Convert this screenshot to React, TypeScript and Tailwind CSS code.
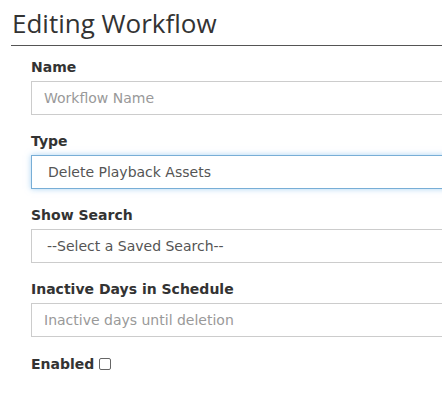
const font = { fontFamily: '"DejaVu Sans", Verdana, sans-serif' };

function Field({ label, children }: { label: string; children: React.ReactNode }) {
  return (
    <div className="mb-4">
      <label className="mb-[4px] block text-[14px] font-bold leading-[20px] text-[#333]">{label}</label>
      {children}
    </div>
  );
}

const box =
  'block h-[34px] w-[480px] border border-[#ccc] bg-white px-[12px] text-[14px] text-[#555] outline-none';

export default function App() {
  return (
    <div className="min-h-[402px] w-[442px] overflow-hidden bg-white" style={font}>
      <h1
        className="ml-[11px] border-b border-[#555] pt-[6px] pb-[5px] pl-[1px] text-[26px] leading-[34px] text-[#333]"
        style={{ fontFamily: '"Open Sans", "Segoe UI", sans-serif' }}
      >
        Editing Workflow
      </h1>
      <form className="pt-[11px] pl-[31px]">
        <Field label="Name">
          <input className={box + ' placeholder:text-[#999]'} placeholder="Workflow Name" />
        </Field>
        <Field label="Type">
          <div className="h-[34px] w-[480px] border border-[#78aed6] bg-white px-[16px] text-[14px] leading-[32px] text-[#555] shadow-[0_0_6px_rgba(102,175,233,0.55)]">
            Delete Playback Assets
          </div>
        </Field>
        <Field label="Show Search">
          <div className="h-[34px] w-[480px] border border-[#ccc] bg-white px-[15px] text-[14px] leading-[32px] text-[#555]">
            --Select a Saved Search--
          </div>
        </Field>
        <Field label="Inactive Days in Schedule">
          <input className={box + ' placeholder:text-[#999]'} placeholder="Inactive days until deletion" />
        </Field>
        <div className="flex items-center gap-[5px] pt-[1px] text-[14px] font-bold leading-[20px] text-[#333]">
          <span>Enabled</span>
          <span className="inline-block h-[12px] w-[12px] rounded-[2px] border border-[#666] bg-white" />
        </div>
      </form>
    </div>
  );
}
